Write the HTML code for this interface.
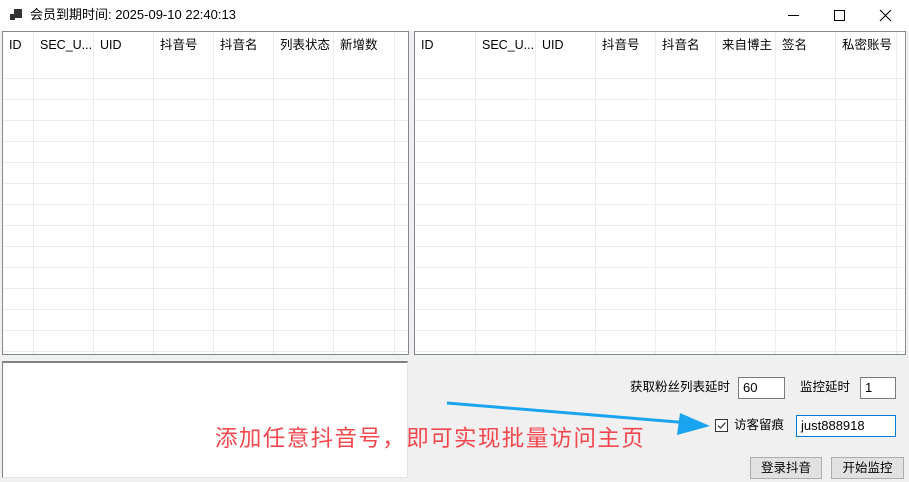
<!DOCTYPE html>
<html><head><meta charset="utf-8"><style>
*{margin:0;padding:0;box-sizing:border-box}
body{width:909px;height:482px;background:#f0f0f0;font-family:"Liberation Sans","Noto Sans CJK SC",sans-serif;font-size:12px;color:#000;position:relative;overflow:hidden;line-height:16px}
.abs{position:absolute}
.title{left:0;top:0;width:909px;height:31px;background:#fff}
.grid{background:#fff;border:1px solid #828790;overflow:hidden}
.hdr{position:absolute;top:0;height:26px;line-height:26px;padding-left:6px;white-space:nowrap;font-size:12.5px}
.vl{position:absolute;top:0;bottom:0;width:1px;background:#ececec}
.hl{position:absolute;left:0;right:0;height:1px;background:#ececec}
.box{background:#fff;border:1px solid #7a7a7a;height:22px;line-height:20px;padding-left:4px;font-size:13px}
.btn{background:#e1e1e1;border:1px solid #adadad;text-align:center;line-height:20px;font-size:12.5px}
.lbl{font-size:12.5px;line-height:16px}
</style></head><body>
<div class="abs title">
  <svg class="abs" style="left:10px;top:9px" width="12" height="12"><rect x="4" y="0" width="8" height="9" fill="#333"/><rect x="0" y="5" width="5" height="6" fill="#333"/></svg>
  <div class="abs" style="left:30px;top:7px;font-size:13px">会员到期时间: 2025-09-10 22:40:13</div>
  <div class="abs" style="left:788px;top:15px;width:11px;height:1px;background:#000"></div>
  <div class="abs" style="left:834px;top:10px;width:11px;height:11px;border:1px solid #000"></div>
  <svg class="abs" style="left:879px;top:9px" width="13" height="13"><path d="M1 1L12 12M12 1L1 12" stroke="#000" stroke-width="1.1"/></svg>
</div>

<div class="abs grid" style="left:2px;top:31px;width:407px;height:324px"><div id="lg"></div></div>
<div class="abs grid" style="left:414px;top:31px;width:492px;height:324px"><div id="rg"></div></div>

<div class="abs" style="left:2px;top:361px;width:406px;height:117px;background:#fff;border:1px solid #828282;border-right-color:#e3e3e3;border-bottom-color:#e3e3e3;border-top-width:2px"></div>
<div class="abs" style="left:215px;top:425px;font-size:22.5px;line-height:28px;color:#f2474f;white-space:nowrap;letter-spacing:1.4px">添加任意抖音号，即可实现批量访问主页</div>
<svg class="abs" style="left:440px;top:395px" width="280" height="45"><line x1="7" y1="8" x2="250" y2="28" stroke="#1aa3ef" stroke-width="3"/><polygon points="270,31 240,18 237,40" fill="#1aa3ef"/></svg>

<div class="abs lbl" style="left:630px;top:379px">获取粉丝列表延时</div>
<div class="abs box" style="left:738px;top:377px;width:47px">60</div>
<div class="abs lbl" style="left:800px;top:379px">监控延时</div>
<div class="abs box" style="left:860px;top:377px;width:36px">1</div>
<div class="abs" style="left:715px;top:419px;width:13px;height:13px;border:1px solid #333;background:#fff"></div>
<svg class="abs" style="left:716px;top:420px" width="11" height="11"><path d="M2 5.5L4.5 8L9.5 2.5" stroke="#333" stroke-width="1.2" fill="none"/></svg>
<div class="abs lbl" style="left:734px;top:417px">访客留痕</div>
<div class="abs box" style="left:796px;top:415px;width:100px;border-color:#0078d7">just888918</div>
<div class="abs btn" style="left:750px;top:457px;width:72px;height:22px">登录抖音</div>
<div class="abs btn" style="left:831px;top:457px;width:73px;height:22px">开始监控</div>

<script>
function build(id,cols,starts,w){
  var g=document.getElementById(id),h='';
  for(var y=46;y<324;y+=21)h+='<div class="hl" style="top:'+y+'px"></div>';
  starts.forEach(function(x,i){ if(i>0)h+='<div class="vl" style="left:'+(x-1)+'px"></div>'; h+='<div class="hdr" style="left:'+x+'px">'+cols[i]+'</div>';});
  h+='<div class="vl" style="left:'+w+'px"></div>';
  g.innerHTML=h;
}
build('lg',['ID','SEC_U...','UID','抖音号','抖音名','列表状态','新增数'],[0,31,91,151,211,271,331],391);
build('rg',['ID','SEC_U...','UID','抖音号','抖音名','来自博主','签名','私密账号'],[0,61,121,181,241,301,361,421],481);
</script>
</body></html>
